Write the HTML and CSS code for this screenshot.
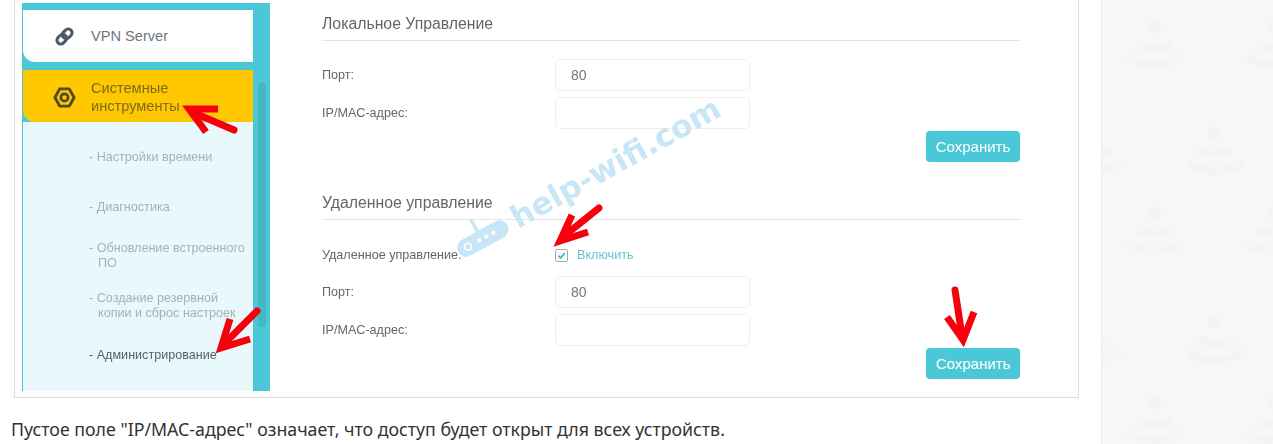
FILE: index.html
```html
<!DOCTYPE html>
<html>

<head>
    <title>Удаленное управление</title>
    <link rel="stylesheet" href="styles.css">
</head>

<body>
    <div class="page">
        <div class="content">
            <div class="frame">
                <div class="shot">
                    <div class="side">
                        <div class="menu">
                            <div class="menu-item item-white">
                                <svg class="menu-icon" viewBox="0 0 24 24">
                                    <g fill="none" stroke="#4d5863" stroke-width="3.2" transform="rotate(-45 12 12)">
                                        <rect x="2.5" y="8" width="11" height="8" rx="4"></rect>
                                        <rect x="10.5" y="8" width="11" height="8" rx="4"></rect>
                                    </g>
                                </svg>
                                <span>VPN Server</span>
                            </div>
                            <div class="menu-item item-yellow">
                                <svg class="menu-icon" viewBox="0 0 24 24">
                                    <path d="M2 12 L7 3 H17 L22 12 L17 21 H7 Z" fill="none" stroke="#4f4a26" stroke-width="3" stroke-linejoin="round"></path>
                                    <circle cx="12" cy="12" r="3.8" fill="none" stroke="#4f4a26" stroke-width="2.8"></circle>
                                </svg>
                                <span>Системные<br>инструменты</span>
                            </div>
                            <ul class="sub-menu">
                                <li><span>- Настройки времени</span></li>
                                <li><span>- Диагностика</span></li>
                                <li><span>- Обновление встроенного<br>ПО</span></li>
                                <li><span>- Создание резервной<br>копии и сброс настроек</span></li>
                                <li class="current"><span>- Администрирование</span></li>
                            </ul>
                        </div>
                        <div class="rail">
                            <div class="thumb"></div>
                        </div>
                    </div>

                    <div class="settings">
                        <div class="form-section">
                            <h3>Локальное Управление</h3>
                            <div class="field first">
                                <label>Порт:</label>
                                <input type="text" value="80">
                            </div>
                            <div class="field">
                                <label>IP/MAC-адрес:</label>
                                <input type="text">
                            </div>
                            <button>Сохранить</button>
                        </div>
                        <div class="form-section second">
                            <h3>Удаленное управление</h3>
                            <div class="check-row">
                                <label>Удаленное управление:</label>
                                <span class="check-box">
                                    <svg viewBox="0 0 12 12">
                                        <path d="M2.6 6.2 L5 8.6 L9.6 3.4" fill="none" stroke="#3fbccb" stroke-width="2"></path>
                                    </svg>
                                </span>
                                <span class="check-text">Включить</span>
                            </div>
                            <div class="field first-after-check">
                                <label>Порт:</label>
                                <input type="text" value="80">
                            </div>
                            <div class="field">
                                <label>IP/MAC-адрес:</label>
                                <input type="text">
                            </div>
                            <button>Сохранить</button>
                        </div>
                    </div>
                </div>
            </div>
            <p class="note">Пустое поле "IP/MAC-адрес" означает, что доступ будет открыт для всех устройств.</p>
        </div>

        <div class="aside">
            <svg class="wifi-bg" width="171" height="444">
                <defs>
                    <g id="wifi">
                        <circle cx="0" cy="0" r="6"></circle>
                        <path d="M-17 16 Q0 27 17 16" fill="none" stroke-width="7"></path>
                        <path d="M-27 30 Q0 46 27 30" fill="none" stroke-width="7"></path>
                    </g>
                </defs>
                <use href="#wifi" x="-8" y="133"></use>
                <use href="#wifi" x="53" y="27"></use>
                <use href="#wifi" x="113" y="133"></use>
                <use href="#wifi" x="172" y="27"></use>
                <use href="#wifi" x="-8" y="322"></use>
                <use href="#wifi" x="53" y="213"></use>
                <use href="#wifi" x="113" y="322"></use>
                <use href="#wifi" x="172" y="213"></use>
                <use href="#wifi" x="53" y="403"></use>
                <use href="#wifi" x="172" y="403"></use>
            </svg>
        </div>

        <!-- watermark and red arrows drawn over the screenshot -->
        <svg class="overlay" width="1273" height="444">
            <g class="watermark">
                <g transform="rotate(-29 482 239)">
                    <rect x="455" y="230" width="56" height="18" rx="9" fill="#c8e6f5"></rect>
                    <rect x="480" y="216" width="3.5" height="15" fill="#c8e6f5"></rect>
                    <circle cx="466" cy="239" r="3.5" fill="none" stroke="#fff" stroke-width="1.5"></circle>
                    <circle cx="479" cy="239" r="2" fill="#fff"></circle>
                    <circle cx="487" cy="239" r="2" fill="#fff"></circle>
                    <circle cx="495" cy="239" r="2" fill="#fff"></circle>
                </g>
                <text class="wm-text" x="0" y="0" transform="translate(518 229) rotate(-29)">help-wifi.com</text>
            </g>
            <g class="arrows">
                <path d="M234 130 L192 112"></path>
                <path class="head" d="M218 109 H189 L206 132"></path>
                <path d="M257 311 L225 343"></path>
                <path class="head" d="M230 319 L221 348 L250 339"></path>
                <path d="M599 208 L564 236"></path>
                <path class="head" d="M572 215 L560 241 L588 232"></path>
                <path d="M955 290 L962 336"></path>
                <path class="head" d="M947 317 L963 340 L974 312"></path>
            </g>
        </svg>
    </div>
</body>

</html>
```

FILE: styles.css
```css
* {
    box-sizing: border-box;
}

body {
    margin: 0px;
    background-color: white;
    font-family: 'Liberation Sans', sans-serif;
    color: #333;
}

.page {
    position: relative;
    display: flex;
    height: 444px;
    overflow: hidden;
}

.content {
    width: 1102px;
    padding-left: 14px;
    padding-right: 22px;
}

.frame {
    height: 398px;
    padding: 3px 0px 0px 7px;
    border: 1px solid #ddd;
    border-top: none;
}

.shot {
    display: flex;
    height: 388px;
    filter: blur(0.4px);
}

.side {
    display: flex;
    width: 248px;
    padding-top: 7px;
    padding-left: 1px;
    background-color: #4ac8d8;
}

.menu {
    display: flex;
    flex-direction: column;
    width: 230px;
}

.menu-item {
    display: flex;
    align-items: center;
    height: 52px;
    padding-left: 30px;
    font-size: 14.6px;
    line-height: 18px;
    border-bottom-left-radius: 12px;
}

.menu-icon {
    width: 23px;
    height: 23px;
    margin-right: 15px;
    flex-shrink: 0;
}

.item-white {
    margin-bottom: 8px;
    background-color: white;
    color: #6b7680;
}

.item-yellow {
    background-color: #ffc800;
    color: #7a6c1e;
    padding-top: 2px;
}

.sub-menu {
    flex: 1;
    margin: 0px;
    padding: 11px 0px 0px 75px;
    list-style: none;
    background-color: #e8f8fb;
    font-size: 12.6px;
    line-height: 15px;
    color: #a6b2b5;
}

.sub-menu li {
    display: flex;
    align-items: center;
    height: 49.4px;
}

.sub-menu span {
    display: block;
    text-indent: -9px;
}

.sub-menu .current {
    color: #555f66;
}

.rail {
    flex: 1;
    padding: 72px 4px 0px 5px;
}

.thumb {
    height: 245px;
    border-radius: 4px;
    background-color: #45b6c4;
}

.settings {
    width: 698px;
    margin-left: 52px;
    padding-top: 9px;
}

.form-section {
    display: flex;
    flex-direction: column;
}

.form-section.second {
    margin-top: 29px;
}

.form-section h3 {
    margin: 0px;
    padding-bottom: 4px;
    border-bottom: 1.5px solid #e4e4e4;
    font-size: 15.8px;
    font-weight: normal;
    line-height: 24px;
    color: #666;
}

.field {
    display: flex;
    align-items: center;
    margin-top: 6px;
}

.field.first {
    margin-top: 18px;
}

.field.first-after-check {
    margin-top: 13px;
}

.field label,
.check-row label {
    width: 233px;
    font-size: 12.6px;
    color: #666;
}

.field input {
    width: 195px;
    height: 32px;
    padding: 0px 15px;
    border: 1px solid #eee;
    border-radius: 5px;
    font-family: 'Liberation Sans', sans-serif;
    font-size: 14px;
    color: #777;
}

.check-row {
    display: flex;
    align-items: center;
    height: 16px;
    margin-top: 27px;
}

.check-box {
    width: 13px;
    height: 13px;
    margin-right: 9px;
    border: 1.5px solid #a8a8a8;
    border-radius: 2px;
}

.check-box svg {
    display: block;
    width: 100%;
    height: 100%;
}

.check-text {
    font-size: 12.6px;
    color: #62c6d2;
}

.form-section button {
    align-self: flex-end;
    width: 94px;
    height: 31px;
    margin-top: 2px;
    border: none;
    border-radius: 4px;
    background-color: #4ac8d8;
    color: white;
    font-family: 'Liberation Sans', sans-serif;
    font-size: 15px;
}

.note {
    margin: 21px 0px 0px -3px;
    font-family: 'Noto Sans', sans-serif;
    font-size: 17.75px;
    line-height: 20px;
    color: #333;
}

.aside {
    flex: 1;
    border-left: 1px solid #eee;
    background-color: #f7f7f7;
}

.wifi-bg {
    display: block;
    fill: #f3f3f3;
    stroke: #f3f3f3;
    filter: blur(1.5px);
}

.overlay {
    position: absolute;
    left: 0px;
    top: 0px;
    pointer-events: none;
    filter: blur(0.4px);
}

.wm-text {
    font-family: 'DejaVu Sans', sans-serif;
    font-size: 31px;
    font-weight: bold;
    fill: #c8e6f5;
}

.arrows path {
    fill: none;
    stroke: #f5000c;
    stroke-width: 7;
    stroke-linecap: round;
}

.arrows .head {
    stroke-width: 7;
    stroke-linejoin: miter;
    stroke-linecap: butt;
}
```
